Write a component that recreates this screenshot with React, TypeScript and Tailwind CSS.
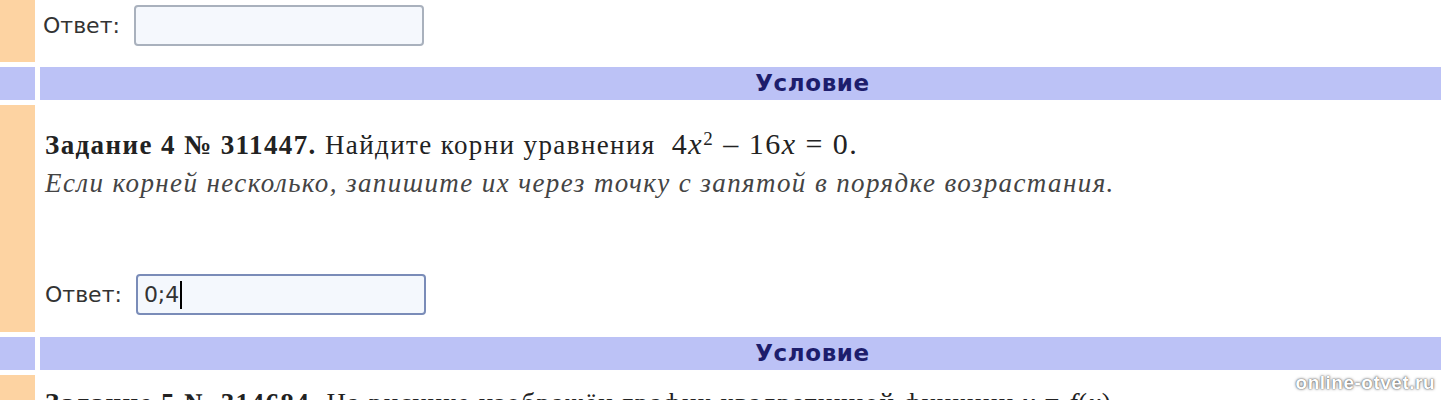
const orange = 'bg-[#fdd3a2]';
const lavender = 'bg-[#bcc2f6]';

function AnswerInput({ value, focused }: { value?: string; focused?: boolean }) {
  return (
    <div
      className={`flex items-center h-[41px] w-[290px] rounded-[4px] border-2 px-[6px] ${
        focused ? 'border-[#7a8cb8] bg-[#f4f8fd]' : 'border-[#a9b1bd] bg-[#f5f8fd]'
      }`}
    >
      {value && <span className="text-[22px] text-[#333]">{value}</span>}
      {focused && <span className="ml-[1px] h-[28px] w-[2px] bg-black" />}
    </div>
  );
}

function AnswerLine(props: { value?: string; focused?: boolean }) {
  return (
    <div className="flex items-center gap-[14px]">
      <span className="text-[22px] text-[#333]">Ответ:</span>
      <AnswerInput {...props} />
    </div>
  );
}

function Header() {
  return (
    <div className="flex gap-[5px] h-[33px]">
      <div className={`w-[35px] ${lavender}`} />
      <div className={`flex-1 flex items-center justify-center pl-[144px] ${lavender}`}>
        <span className="text-[23px] font-bold tracking-[0.6px] text-[#1d1d6c]">Условие</span>
      </div>
    </div>
  );
}

export default function App() {
  return (
    <div className="relative h-[400px] overflow-hidden bg-white flex flex-col gap-[5px] font-['DejaVu_Sans',sans-serif]">
      {/* ответ предыдущего задания */}
      <div className="flex gap-[5px] h-[62px] shrink-0">
        <div className={`w-[35px] ${orange}`} />
        <div className="flex-1 pl-[3px] pt-[5px]">
          <AnswerLine />
        </div>
      </div>

      <Header />

      {/* задание 4 */}
      <div className="flex gap-[5px] h-[227px] shrink-0">
        <div className={`w-[35px] ${orange}`} />
        <div className="flex-1 pl-[5px] flex flex-col font-['Liberation_Serif',serif] text-[#222]">
          <p className="mt-[23px] text-[27px] leading-[32px] tracking-[1.4px]">
            <b>Задание 4 № 311447.</b> Найдите корни уравнения{' '}
            <span className="ml-[8px] text-[30px] tracking-[1.5px]">
              4<i>x</i>
              <sup className="text-[19px]">2</sup> – 16<i>x</i> = 0.
            </span>
          </p>
          <p className="mt-[6px] text-[27px] leading-[32px] tracking-[1.4px] italic text-[#444]">
            Если корней несколько, запишите их через точку с запятой в порядке возрастания.
          </p>
          <div className="mt-auto pb-[17px] font-['DejaVu_Sans',sans-serif]">
            <AnswerLine value="0;4" focused />
          </div>
        </div>
      </div>

      <Header />

      {/* задание 5 */}
      <div className="flex gap-[5px] flex-1">
        <div className={`w-[35px] ${orange}`} />
        <div className="flex-1 pl-[5px] pt-[12px] font-['Liberation_Serif',serif] text-[#222]">
          <p className="text-[27px] leading-[32px] tracking-[1.4px] whitespace-nowrap">
            <b>Задание 5 № 314684.</b> На рисунке изображён график квадратичной функции <i>y</i> = <i>f</i>(<i>x</i>).
          </p>
        </div>
      </div>

      <span className="absolute right-[6px] bottom-[3px] text-[19px] font-bold text-white tracking-[0.5px] [text-shadow:0_0_3px_#555,0_0_1px_#555] font-['Liberation_Sans',sans-serif]">
        online-otvet.ru
      </span>
    </div>
  );
}
